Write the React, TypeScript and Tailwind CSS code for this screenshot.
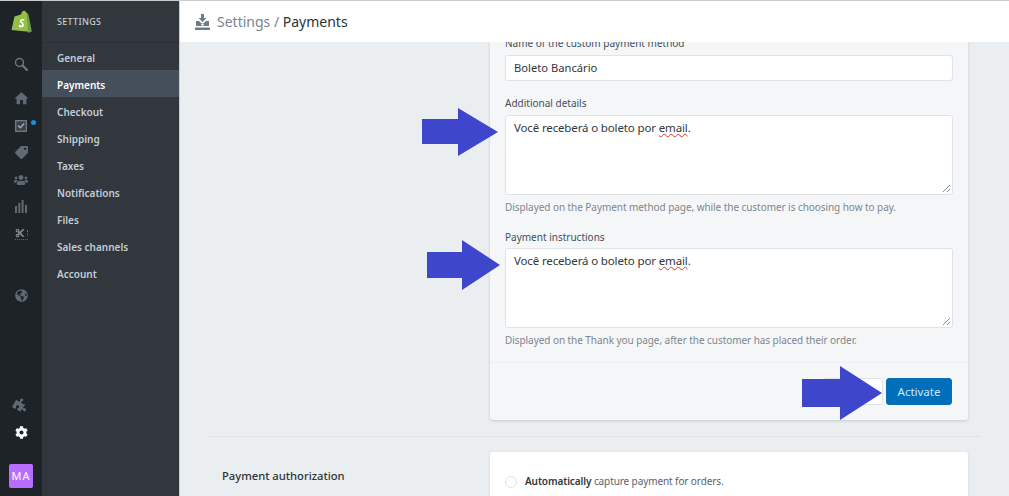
import { FaCog, FaCut, FaGlobeAmericas, FaPuzzlePiece, FaTag, FaUsers } from "react-icons/fa";
import { MdHome } from "react-icons/md";

const navItems = ["General", "Payments", "Checkout", "Shipping", "Taxes", "Notifications", "Files", "Sales channels", "Account"];

function ShopifyLogo() {
  return (
    <svg width="21" height="24" viewBox="0 0 21 24">
      <path d="M3.500 6.500 10 4.500C10.500 2 12 .5 13.500 .8c.8.200 1.300.8 1.500 1.700l1 .2L18 21.800 .5 20z" fill="#95bf47" />
      <path d="M16 2.800 17.500 4.500 20.800 21.500 17 23z" fill="#6f9e45" />
      <path d="M13.500 9.500s-1-.5-2.200-.4c-2.500.2-3 2-2 3.200 1 1.100 2.200 1.500 1.900 2.600-.2.800-1.700.7-3-.2l-.5 2c1.500.8 3.700.9 4.700-.3 1.200-1.500.4-3-1-4.200-.8-.7-1-1.100-.7-1.500.3-.4 1.300-.3 2.200.1z" fill="#fff" />
    </svg>
  );
}

function SearchIcon() {
  return (
    <svg width="14" height="14" viewBox="0 0 14 14" fill="none" stroke="#6b7680" strokeWidth="1.500">
      <circle cx="5.500" cy="5.500" r="4" />
      <path d="M8.500 8.500 13 13" strokeWidth="2.400" strokeLinecap="round" />
    </svg>
  );
}

function OrdersIcon() {
  return (
    <svg width="12" height="12" viewBox="0 0 12 12" fill="none">
      <rect x="0.700" y="0.700" width="10.600" height="10.600" fill="#39424a" stroke="#79838b" strokeWidth="1.200" />
      <path d="M3 5.500 5.300 7.800 9.200 3.500" stroke="#a5adb4" strokeWidth="1.300" />
    </svg>
  );
}

function BarsIcon() {
  return (
    <svg width="12" height="13" viewBox="0 0 12 13" fill="#5f6a73">
      <rect x="0" y="6" width="2" height="7" />
      <rect x="3.300" y="3" width="2" height="10" />
      <rect x="6.600" y="0" width="2" height="13" />
      <rect x="10" y="5" width="2" height="8" />
    </svg>
  );
}

function ScissorsIcon() {
  return (
    <div className="relative h-[12px] w-[13px]">
      <FaCut size={10} className="text-[#7b858d]" />
      <span className="absolute right-0 top-[2px] h-[6px] border-r border-dotted border-[#5f6a73]" />
      <span className="absolute bottom-0 left-0 w-[13px] border-b border-dotted border-[#5f6a73]" />
    </div>
  );
}

function Arrow({ className, width, height, neck, shaftTop, shaftBottom }: { className: string; width: number; height: number; neck: number; shaftTop: number; shaftBottom: number }) {
  return (
    <svg className={className} width={width} height={height} viewBox={`0 0 ${width} ${height}`}>
      <path d={`M0 ${shaftTop}H${neck}V0L${width} ${height / 2}L${neck} ${height}V${shaftBottom}H0Z`} fill="#3e46cb" />
    </svg>
  );
}

function TextBox({ text }: { text: string }) {
  return (
    <div className="relative h-20 rounded-[3px] border border-[#dfe3e8] bg-white px-2 py-[3px] text-[11.500px] leading-[18px] tracking-[-0.140px] text-[#31373d]">
      {text} por <span className="underline decoration-[#d9342b] decoration-wavy decoration-1">email</span>.
      <svg className="absolute bottom-0.5 right-0.5" width="7" height="7" viewBox="0 0 7 7" stroke="#8a9299">
        <path d="M0 7 7 0M4 7 7 4" />
      </svg>
    </div>
  );
}

export default function App() {
  return (
    <div className="relative flex h-[496px] w-[1009px] overflow-hidden border-t border-[#c9cbcc] bg-[#ebeef0] font-['Noto_Sans','Open_Sans',sans-serif]">
      <aside className="flex w-[42px] shrink-0 flex-col items-center bg-[#1d2327]">
        <div className="mt-[9px] flex h-6 items-center">
          <ShopifyLogo />
        </div>
        <div className="mt-[23px]">
          <SearchIcon />
        </div>
        <div className="mt-[14px] flex flex-col items-center text-[#5f6a73]">
          <div className="flex h-[27px] items-center"><MdHome size={17} /></div>
          <div className="relative flex h-[27px] items-center">
            <OrdersIcon />
            <span className="absolute -right-[9px] top-[8px] h-[5px] w-[5px] rounded-full bg-[#1a8fe3]" />
          </div>
          <div className="flex h-[27px] items-center"><FaTag size={13} className="-scale-x-100" /></div>
          <div className="flex h-[27px] items-center"><FaUsers size={14} /></div>
          <div className="flex h-[27px] items-center"><BarsIcon /></div>
          <div className="flex h-[27px] items-center"><ScissorsIcon /></div>
        </div>
        <FaGlobeAmericas size={13} className="mt-[42px] text-[#5f6a73]" />
        <div className="mt-auto flex flex-col items-center">
          <FaPuzzlePiece size={14} className="rotate-[30deg] text-[#5f6a73]" />
          <FaCog size={13} className="mt-[14px] text-white" />
          <div className="mt-[25px] mb-[8px] flex h-6 w-6 items-center justify-center rounded-[2px] bg-[#b76dff] text-[11px] tracking-[1px] text-white">MA</div>
        </div>
      </aside>

      <nav className="w-[138px] shrink-0 border-r border-[#c9cdd0] bg-[#31373d]">
        <div className="flex h-[42px] items-center border-b border-[#2b3036] pl-[15px] text-[9px] font-medium tracking-[0.300px] text-[#c4cdd5]">SETTINGS</div>
        <ul>
          {navItems.map((item) => (
            <li
              key={item}
              className={item === "Payments" ? "flex h-[27px] items-center bg-[#454f5b] pl-[15px] pt-[3px] text-[10px] font-semibold text-white" : "flex h-[27px] items-center pl-[15px] pt-[3px] text-[10px] font-semibold text-[#c4cdd5]"}
            >
              {item}
            </li>
          ))}
        </ul>
      </nav>

      <main className="flex min-w-0 flex-1 flex-col">
        <header className="z-10 flex h-[41px] shrink-0 items-center gap-[7px] bg-white pl-[15px] text-[14px]">
          <svg width="15" height="16" viewBox="0 0 15 16" fill="#6f7c88">
            <path d="M6 0h3v4h2.500L7.500 8 3.500 4H6z" />
            <path d="M1 7h3l2 2h3l2-2h3v5H1zM0 13.500h15V16H0z" />
            <circle cx="7.500" cy="10.500" r="1.200" fill="#fff" />
          </svg>
          <h1>
            <span className="text-[#79848e]">Settings / </span>
            <span className="text-[#2d3338]">Payments</span>
          </h1>
        </header>

        <div className="flex-1 overflow-hidden pl-7 pr-7">
          <div className="-mt-[6px] ml-[282px] w-[478px] rounded-[3px] bg-[#f4f6f8] shadow-[0_1px_3px_rgba(63,63,68,0.2)]">
            <div className="px-[15px] pt-0">
              <div className="text-[10px] leading-[14px] text-[#454f5b]">Name of the custom payment method</div>
              <div className="mt-[5px] flex h-[26px] items-center rounded-[3px] border border-[#dfe3e8] bg-white px-2 text-[11.200px] text-[#31373d]">Boleto Bancário</div>
              <div className="mt-[15px] text-[10px] leading-[14px] text-[#454f5b]">Additional details</div>
              <div className="mt-[5px]">
                <TextBox text="Você receberá o boleto" />
              </div>
              <p className="mt-[5px] text-[10px] leading-[14px] tracking-[-0.060px] text-[#7f878e]">Displayed on the Payment method page, while the customer is choosing how to pay.</p>
              <div className="mt-[16px] text-[10px] leading-[14px] text-[#454f5b]">Payment instructions</div>
              <div className="mt-[4px]">
                <TextBox text="Você receberá o boleto" />
              </div>
              <p className="mt-[5px] text-[10px] leading-[14px] tracking-[-0.060px] text-[#7f878e]">Displayed on the Thank you page, after the customer has placed their order.</p>
            </div>
            <div className="mt-[15px] flex h-[58px] items-center justify-end gap-[3px] border-t border-[#eceff1] pr-4">
              <div className="h-[27px] w-[60px] rounded-[3px] border border-[#dfe3e8] bg-white" />
              <button className="h-[27px] w-[66px] rounded-[3px] border border-[#0a6fb5] bg-[#006fbb] text-[11.500px] text-[#cfe8fa]">Activate</button>
            </div>
          </div>

          <div className="mt-[16px] border-t border-[#dfe3e6] pl-[14px] pt-[15px]">
            <div className="flex">
              <h2 className="w-[268px] pt-[16px] text-[11.200px] font-medium text-[#2d3338]">Payment authorization</h2>
              <section className="h-[60px] w-[478px] rounded-[3px] bg-white px-[15px] pt-[22px] shadow-[0_1px_3px_rgba(63,63,68,0.15)]">
                <div className="flex items-center gap-2 text-[10px] tracking-[-0.100px] text-[#5c6268]">
                  <span className="h-3 w-3 rounded-full border border-[#dfe3e8] bg-white" />
                  <span>
                    <strong className="font-semibold text-[#31373d]">Automatically</strong> capture payment for orders.
                  </span>
                </div>
              </section>
            </div>
          </div>
        </div>
      </main>

      <Arrow className="absolute left-[422px] top-[107px]" width={76} height={48} neck={36} shaftTop={11} shaftBottom={36} />
      <Arrow className="absolute left-[427px] top-[239px]" width={73} height={50} neck={35} shaftTop={12} shaftBottom={38} />
      <Arrow className="absolute left-[802px] top-[365px]" width={80} height={54} neck={38} shaftTop={13} shaftBottom={41} />
    </div>
  );
}
